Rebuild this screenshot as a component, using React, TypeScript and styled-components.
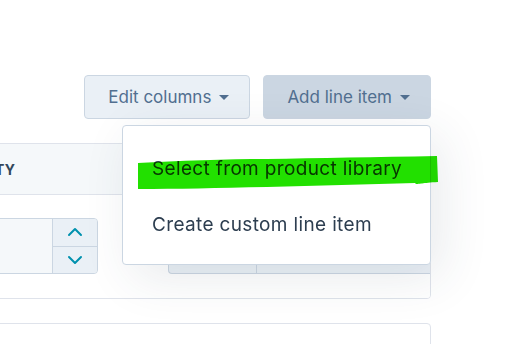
import React from "react";
import styled, { createGlobalStyle } from "styled-components";

const GlobalStyle = createGlobalStyle`
  html, body {
    margin: 0;
    padding: 0;
    background: #ffffff;
  }
  body {
    font-family: Inter, "Noto Sans", sans-serif;
    color: #33475b;
    -webkit-font-smoothing: antialiased;
  }
  #root {
    width: 526px;
    height: 344px;
    overflow: hidden;
  }
`;

const Page = styled.div`
  width: 526px;
  height: 344px;
  box-sizing: border-box;
  padding: 75px 95px 0 0;
  display: flex;
  flex-direction: column;
  align-items: flex-end;
  gap: 24px;
`;

const Toolbar = styled.div`
  display: flex;
  gap: 13px;
  position: relative;
  z-index: 2;
`;

const MenuAnchor = styled.div`
  position: relative;
`;

const Button = styled.button<{ $active?: boolean }>`
  height: 44px;
  padding: 0 20px 0 23px;
  display: flex;
  align-items: center;
  gap: 8px;
  font-family: inherit;
  font-size: 17px;
  color: #516f90;
  background: ${({ $active }) => ($active ? "#cbd6e2" : "#eaf0f6")};
  border: 1px solid #cbd6e2;
  border-radius: 4px;
  cursor: pointer;
`;

const Caret = styled.span`
  width: 0;
  height: 0;
  border-left: 5px solid transparent;
  border-right: 5px solid transparent;
  border-top: 5px solid #516f90;
  margin-top: 1px;
`;

const Dropdown = styled.div`
  position: absolute;
  top: calc(100% + 6px);
  right: 0;
  width: 309px;
  box-sizing: border-box;
  padding: 14px 0 12px;
  background: #ffffff;
  border: 1px solid #cbd6e2;
  border-radius: 4px;
  box-shadow: 10px 12px 50px rgba(45, 62, 80, 0.11);
`;

const MenuItem = styled.div`
  height: 56px;
  display: flex;
  align-items: center;
  padding: 0 29px;
  font-size: 19px;
  letter-spacing: 0.35px;
  color: #2d3e50;
  white-space: nowrap;
`;

const Highlight = styled.svg`
  position: absolute;
  left: 14px;
  top: 29px;
  width: 302px;
  height: 36px;
  mix-blend-mode: multiply;
  pointer-events: none;
`;

const Card = styled.div<{ $tall?: boolean }>`
  width: 600px;
  flex-shrink: 0;
  box-sizing: border-box;
  border: 1px solid #dfe3eb;
  border-radius: 4px;
  overflow: hidden;
  background: #ffffff;
  min-height: ${({ $tall }) => ($tall ? "60px" : "auto")};
`;

const Row = styled.div<{ $header?: boolean }>`
  display: grid;
  grid-template-columns: 94px 230px 1fr;
  align-items: center;
  background: ${({ $header }) => ($header ? "#f5f8fa" : "#ffffff")};
  border-bottom: ${({ $header }) => ($header ? "1px solid #dfe3eb" : "none")};
  height: ${({ $header }) => ($header ? "50px" : "auto")};
  padding: ${({ $header }) => ($header ? "0" : "23px 0 24px")};
`;

const HeadCell = styled.div`
  padding-left: 12px;
  font-size: 14px;
  font-weight: 700;
  letter-spacing: 0.3px;
  color: #33475b;
  white-space: nowrap;
`;

const Cell = styled.div`
  padding-left: 12px;
`;

const NumberInput = styled.div`
  width: 160px;
  height: 56px;
  box-sizing: border-box;
  display: flex;
  background: #f5f8fa;
  border: 1px solid #cbd6e2;
  border-radius: 4px;
  overflow: hidden;
`;

const InputField = styled.div`
  flex: 1;
`;

const Stepper = styled.div`
  width: 44px;
  display: flex;
  flex-direction: column;
  border-left: 1px solid #cbd6e2;
  background: #eaf0f6;
`;

const StepButton = styled.div<{ $top?: boolean }>`
  flex: 1;
  display: flex;
  align-items: center;
  justify-content: center;
  border-bottom: ${({ $top }) => ($top ? "1px solid #cbd6e2" : "none")};
`;

const PriceInput = styled.div`
  height: 56px;
  box-sizing: border-box;
  display: grid;
  grid-template-columns: 87px 1fr;
  background: #eaf0f6;
  border: 1px solid #cbd6e2;
  border-right: none;
  border-radius: 4px 0 0 4px;
`;

const PricePart = styled.div`
  border-left: 1px solid #cbd6e2;
`;

const Chevron = ({ up }: { up?: boolean }) => (
  <svg width="16" height="10" viewBox="0 0 16 10">
    <path
      d={up ? "M2 8 L8 2 L14 8" : "M2 2 L8 8 L14 2"}
      fill="none"
      stroke="#0091ae"
      strokeWidth="2"
      strokeLinecap="round"
      strokeLinejoin="round"
    />
  </svg>
);

export default function App() {
  return (
    <>
      <GlobalStyle />
      <Page>
        <Toolbar>
          <Button>
            Edit columns
            <Caret />
          </Button>
          <MenuAnchor>
            <Button $active>
              Add line item
              <Caret />
            </Button>
            <Dropdown>
              <MenuItem>Select from product library</MenuItem>
              <MenuItem>Create custom line item</MenuItem>
              <Highlight viewBox="0 0 302 36">
                <path
                  d="M1 8 C40 6 90 4 130 4 C180 3 240 2 300 1 L301 27 C285 28 282 29 279 29 L278 28 C230 29 180 31 130 32 C80 33 40 34 1 34 Z"
                  fill="#22e000"
                />
              </Highlight>
            </Dropdown>
          </MenuAnchor>
        </Toolbar>

        <Card>
          <Row $header>
            <HeadCell>NAME</HeadCell>
            <HeadCell>QUANTITY</HeadCell>
            <HeadCell />
          </Row>
          <Row>
            <Cell />
            <Cell>
              <NumberInput>
                <InputField />
                <Stepper>
                  <StepButton $top>
                    <Chevron up />
                  </StepButton>
                  <StepButton>
                    <Chevron />
                  </StepButton>
                </Stepper>
              </NumberInput>
            </Cell>
            <Cell>
              <PriceInput>
                <div />
                <PricePart />
              </PriceInput>
            </Cell>
          </Row>
        </Card>

        <Card $tall />
      </Page>
    </>
  );
}
